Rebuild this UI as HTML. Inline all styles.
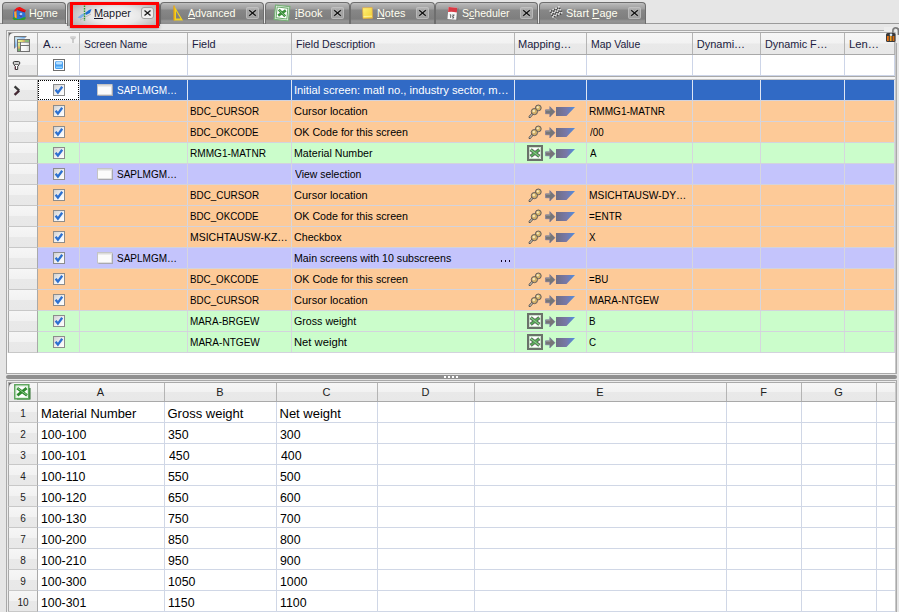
<!DOCTYPE html><html><head><meta charset="utf-8"><style>

*{box-sizing:border-box;margin:0;padding:0}
html,body{width:899px;height:612px;overflow:hidden;background:#e6e6e6;font-family:"Liberation Sans", sans-serif;position:relative}
div,svg{position:absolute;display:block}
.tx{white-space:nowrap;line-height:13px;transform-origin:0 0}
.tab{top:2px;height:22px;border:1px solid #6e6e6e;border-bottom:none;border-radius:4px 4px 0 0;
 background:linear-gradient(#c2c2c2 0px,#b0b0b0 2px,#9e9e9e 6px,#878787 7px,#7e7e7e 16px,#969696 18px,#8c8c8c 21px);}
.cl{top:7px;width:13px;height:12px;border:1px solid rgba(200,200,200,0.6);border-radius:2px;background:rgba(200,200,200,0.45)}
.u{text-decoration:underline}
.hg{background:linear-gradient(#f6f6f6 0%,#f2f2f2 48%,#e9e9e9 52%,#e8e8e8 100%)}
.vl{width:1px}
.hl{height:1px}

</style></head><body>
<div style="left:0;top:23px;width:899px;height:1px;background:#9a9a9a"></div>
<div class="tab" style="left:2px;width:64px;"></div>
<div class="tx" style="left:28.82px;top:7px;font-size:11px;color:#fffef0;transform:scaleX(0.9821);">H<span class="u">o</span>me</div>
<div class="tab" style="left:67px;width:93px;background:radial-gradient(ellipse 60% 85% at 52% 55%,#fafafa 0%,#e8e8e8 45%,#a8a8a8 100%);border-color:#777;height:24px;"></div>
<div class="tx" style="left:94.41px;top:7px;font-size:11px;color:#1a1a2a;transform:scaleX(0.9889);"><span class="u">M</span>apper</div>
<div class="cl" style="left:141px;background:linear-gradient(#e6e6e6,#f4f4f4);border-color:#a4a4a4;border-radius:3px"></div>
<svg style="left:141px;top:7px" width="13" height="12" viewBox="0 0 13 12"><path d="M3.5 3.5 L9.5 8.5 M9.5 3.5 L3.5 8.5" stroke="#1a1a1a" stroke-width="1.3"/></svg>
<div class="tab" style="left:160px;width:104px;"></div>
<div class="tx" style="left:188.00px;top:7px;font-size:11px;color:#fffef0;transform:scaleX(0.9688);"><span class="u">A</span>dvanced</div>
<div class="cl" style="left:246px;"></div>
<svg style="left:246px;top:7px" width="13" height="12" viewBox="0 0 13 12"><path d="M3.2 3.2 L9.8 8.8 M9.8 3.2 L3.2 8.8" stroke="#fff" stroke-opacity="0.3" stroke-width="2.8"/><path d="M3.2 3.2 L9.8 8.8 M9.8 3.2 L3.2 8.8" stroke="#151515" stroke-width="1.4"/></svg>
<div class="tab" style="left:265px;width:85px;"></div>
<div class="tx" style="left:295.00px;top:7px;font-size:11px;color:#fffef0;transform:scaleX(1.0000);"><span class="u">i</span>Book</div>
<div class="cl" style="left:331px;"></div>
<svg style="left:331px;top:7px" width="13" height="12" viewBox="0 0 13 12"><path d="M3.2 3.2 L9.8 8.8 M9.8 3.2 L3.2 8.8" stroke="#fff" stroke-opacity="0.3" stroke-width="2.8"/><path d="M3.2 3.2 L9.8 8.8 M9.8 3.2 L3.2 8.8" stroke="#151515" stroke-width="1.4"/></svg>
<div class="tab" style="left:350px;width:85px;"></div>
<div class="tx" style="left:376.81px;top:7px;font-size:11px;color:#fffef0;transform:scaleX(0.9857);"><span class="u">N</span>otes</div>
<div class="cl" style="left:416px;"></div>
<svg style="left:416px;top:7px" width="13" height="12" viewBox="0 0 13 12"><path d="M3.2 3.2 L9.8 8.8 M9.8 3.2 L3.2 8.8" stroke="#fff" stroke-opacity="0.3" stroke-width="2.8"/><path d="M3.2 3.2 L9.8 8.8 M9.8 3.2 L3.2 8.8" stroke="#151515" stroke-width="1.4"/></svg>
<div class="tab" style="left:435px;width:103px;"></div>
<div class="tx" style="left:461.74px;top:7px;font-size:11px;color:#fffef0;transform:scaleX(0.9604);">S<span class="u">c</span>heduler</div>
<div class="cl" style="left:520px;"></div>
<svg style="left:520px;top:7px" width="13" height="12" viewBox="0 0 13 12"><path d="M3.2 3.2 L9.8 8.8 M9.8 3.2 L3.2 8.8" stroke="#fff" stroke-opacity="0.3" stroke-width="2.8"/><path d="M3.2 3.2 L9.8 8.8 M9.8 3.2 L3.2 8.8" stroke="#151515" stroke-width="1.4"/></svg>
<div class="tab" style="left:539px;width:107px;"></div>
<div class="tx" style="left:565.91px;top:7px;font-size:11px;color:#fffef0;transform:scaleX(0.9922);">Start <span class="u">P</span>age</div>
<div class="cl" style="left:628px;"></div>
<svg style="left:628px;top:7px" width="13" height="12" viewBox="0 0 13 12"><path d="M3.2 3.2 L9.8 8.8 M9.8 3.2 L3.2 8.8" stroke="#fff" stroke-opacity="0.3" stroke-width="2.8"/><path d="M3.2 3.2 L9.8 8.8 M9.8 3.2 L3.2 8.8" stroke="#151515" stroke-width="1.4"/></svg>
<svg style="left:11px;top:5px" width="16" height="15" viewBox="0 0 16 15"><path d="M2 8.5 Q2 4.5 5.5 3.5 L14 6.5 L14.5 12 Q14 14.5 8.5 14.5 Q2 14.5 2 11.5 Z" fill="#2f70d2"/><path d="M3.5 5 Q6 1.5 9 2 L15 5.2 L14 7.2 L6.5 5 L3.5 7 Z" fill="#f01414"/><path d="M7 4.8 L14 7" stroke="#b00" stroke-width="0.8"/><path d="M3.2 6.5 L5.5 6 L6 13 L3.5 13.5 Z" fill="#f08a1a"/><path d="M4 7 L4.5 12.5" stroke="#ffc060" stroke-width="0.8"/><circle cx="10" cy="9" r="1.3" fill="#a8d0ff"/><path d="M8.5 10 Q9 12 11 11" stroke="#6a2a80" stroke-width="0.9" fill="none"/><path d="M1.5 13 Q3 11.5 5 13.5 Q8 15 11 13 Q13 12 15 12.5 L14 14.5 Q9 16 5 15.5 Q2 15 1.5 13 Z" fill="#2aa02a"/></svg>
<svg style="left:76px;top:5px" width="17" height="17" viewBox="0 0 17 17"><path d="M1.5 12.5 L6 9 L8 8.5 L9 10 L4.5 13.5 Z" fill="#7ab0e8"/><path d="M9 8 L13 5 L15.5 4 L14 8 L10 10 Z" fill="#1f6fd0"/><path d="M4 15 L15 9" stroke="#a0a0a0" stroke-width="0.6"/><path d="M8.5 0.5 V16" stroke="#2e9a2e" stroke-width="1.4" stroke-dasharray="1.5 1"/></svg>
<svg style="left:172px;top:4px" width="13" height="18" viewBox="0 0 13 18"><path d="M2 1.5 L2 16.5 L11 16.5 Z M4 7 L4 14.5 L8.5 14.5 Z" fill="#f2d21e" fill-rule="evenodd"/><path d="M2 1.5 L2 16.5" stroke="#e8a010" stroke-width="1.2"/></svg>
<svg style="left:273px;top:4px" width="18" height="18" viewBox="0 0 18 18"><g transform="rotate(6 9 9)"><rect x="1.8" y="1.8" width="14.4" height="14.4" fill="#eef8ee" stroke="#78b078" stroke-width="1.2"/><rect x="3.6" y="3.6" width="10.8" height="10.8" fill="#fff" stroke="#68a868" stroke-width="1"/><path d="M5.5 6 L12.5 12 M12.5 6 L5.5 12" stroke="#3a8e3a" stroke-width="2.6"/><path d="M5.8 6.2 L12 11.5" stroke="#98d098" stroke-width="0.7"/></g></svg>
<svg style="left:361px;top:6px" width="13" height="14" viewBox="0 0 13 14"><defs><linearGradient id="ng" x1="0" y1="0" x2="1" y2="1"><stop offset="0" stop-color="#fff27a"/><stop offset="1" stop-color="#f0cc30"/></linearGradient></defs><path d="M1.5 1.8 L11.2 1.5 L11.6 12.2 L2 12.6 Z" fill="url(#ng)" stroke="#e0a848" stroke-width="0.7"/><path d="M2.5 10.5 L11 10.2" stroke="#fff7a8" stroke-width="0.8"/></svg>
<svg style="left:446px;top:5px" width="14" height="16" viewBox="0 0 14 16"><g transform="rotate(5 7 8)"><rect x="10.5" y="3" width="1.8" height="12" fill="#7a7a7a"/><rect x="2" y="2.5" width="8.8" height="12" fill="#f8f8f8"/><path d="M2 2.5 H10.8 V7.2 Q6 6.5 2 7.5 Z" fill="#d83a44"/><path d="M4 10 H5 V13 M6.5 10 H8.5 L6.7 11.4 Q8.6 11.6 8 13 H6.5" fill="none" stroke="#555" stroke-width="0.9"/></g></svg>
<svg style="left:549px;top:5px" width="16" height="16" viewBox="0 0 16 16"><g transform="rotate(-25 8 7)" opacity="0.9"><rect x="1.5" y="2.5" width="1.6" height="1.6" fill="#f0f0f0"/><rect x="3.1" y="3.1" width="1.6" height="1.6" fill="#404040"/><rect x="4.7" y="2.5" width="1.6" height="1.6" fill="#f0f0f0"/><rect x="6.3" y="3.1" width="1.6" height="1.6" fill="#404040"/><rect x="7.9" y="2.5" width="1.6" height="1.6" fill="#f0f0f0"/><rect x="9.5" y="3.1" width="1.6" height="1.6" fill="#404040"/><rect x="11.1" y="2.5" width="1.6" height="1.6" fill="#f0f0f0"/><rect x="1.5" y="4.1" width="1.6" height="1.6" fill="#404040"/><rect x="3.1" y="4.7" width="1.6" height="1.6" fill="#f0f0f0"/><rect x="4.7" y="4.1" width="1.6" height="1.6" fill="#404040"/><rect x="6.3" y="4.7" width="1.6" height="1.6" fill="#f0f0f0"/><rect x="7.9" y="4.1" width="1.6" height="1.6" fill="#404040"/><rect x="9.5" y="4.7" width="1.6" height="1.6" fill="#f0f0f0"/><rect x="11.1" y="4.1" width="1.6" height="1.6" fill="#404040"/><rect x="1.5" y="5.7" width="1.6" height="1.6" fill="#f0f0f0"/><rect x="3.1" y="6.3" width="1.6" height="1.6" fill="#404040"/><rect x="4.7" y="5.7" width="1.6" height="1.6" fill="#f0f0f0"/><rect x="6.3" y="6.3" width="1.6" height="1.6" fill="#404040"/><rect x="7.9" y="5.7" width="1.6" height="1.6" fill="#f0f0f0"/><rect x="9.5" y="6.3" width="1.6" height="1.6" fill="#404040"/><rect x="11.1" y="5.7" width="1.6" height="1.6" fill="#f0f0f0"/><rect x="1.5" y="7.3" width="1.6" height="1.6" fill="#404040"/><rect x="3.1" y="7.9" width="1.6" height="1.6" fill="#f0f0f0"/><rect x="4.7" y="7.3" width="1.6" height="1.6" fill="#404040"/><rect x="6.3" y="7.9" width="1.6" height="1.6" fill="#f0f0f0"/><rect x="7.9" y="7.3" width="1.6" height="1.6" fill="#404040"/><rect x="9.5" y="7.9" width="1.6" height="1.6" fill="#f0f0f0"/><rect x="11.1" y="7.3" width="1.6" height="1.6" fill="#404040"/><rect x="1.5" y="8.9" width="1.6" height="1.6" fill="#f0f0f0"/><rect x="3.1" y="9.5" width="1.6" height="1.6" fill="#404040"/><rect x="4.7" y="8.9" width="1.6" height="1.6" fill="#f0f0f0"/><rect x="6.3" y="9.5" width="1.6" height="1.6" fill="#404040"/><rect x="7.9" y="8.9" width="1.6" height="1.6" fill="#f0f0f0"/><rect x="9.5" y="9.5" width="1.6" height="1.6" fill="#404040"/><rect x="11.1" y="8.9" width="1.6" height="1.6" fill="#f0f0f0"/></g><path d="M3.5 11 L7.5 15" stroke="#d0d0d0" stroke-width="0.9" opacity="0.6"/></svg>
<div style="left:70px;top:2px;width:89px;height:26px;border:3px solid #ff0000;box-shadow:0 1px 3px rgba(0,0,0,0.35)"></div>
<div style="left:6px;top:30px;width:891px;height:344px;border:1px solid #a9a9a9;background:#f0f0f0"></div>
<div style="left:7px;top:353px;width:889px;height:20px;background:#fff"></div>
<div style="left:38px;top:55px;width:857px;height:21px;background:#fff"></div>
<div style="left:884px;top:27px;width:15px;height:16px;background:#ececec"></div>
<div class="hg" style="left:8px;top:32px;width:887px;height:23px;border-left:1px solid #a9a9a9;border-top:1px solid #a9a9a9;border-bottom:1px solid #a9a9a9"></div>
<div style="left:895px;top:32px;width:1px;height:341px;background:#c8c8c8"></div>
<div class="vl" style="left:37px;top:33px;height:21px;background:#b4b4b4"></div>
<div class="vl" style="left:79px;top:33px;height:21px;background:#b4b4b4"></div>
<div class="vl" style="left:187px;top:33px;height:21px;background:#b4b4b4"></div>
<div class="vl" style="left:291px;top:33px;height:21px;background:#b4b4b4"></div>
<div class="vl" style="left:514px;top:33px;height:21px;background:#b4b4b4"></div>
<div class="vl" style="left:586px;top:33px;height:21px;background:#b4b4b4"></div>
<div class="vl" style="left:692px;top:33px;height:21px;background:#b4b4b4"></div>
<div class="vl" style="left:760px;top:33px;height:21px;background:#b4b4b4"></div>
<div class="vl" style="left:844px;top:33px;height:21px;background:#b4b4b4"></div>
<div class="vl" style="left:894px;top:33px;height:21px;background:#b4b4b4"></div>
<div class="tx" style="left:42.90px;top:38px;font-size:11px;color:#1b1b40;transform:scaleX(1.0353);">A…</div>
<div class="tx" style="left:83.86px;top:38px;font-size:11px;color:#1b1b40;transform:scaleX(0.9424);">Screen Name</div>
<div class="tx" style="left:191.71px;top:38px;font-size:11px;color:#1b1b40;transform:scaleX(0.9909);">Field</div>
<div class="tx" style="left:295.63px;top:38px;font-size:11px;color:#1b1b40;transform:scaleX(0.9675);">Field Description</div>
<div class="tx" style="left:518.30px;top:38px;font-size:11px;color:#1b1b40;transform:scaleX(1.0039);">Mapping…</div>
<div class="tx" style="left:590.65px;top:38px;font-size:11px;color:#1b1b40;transform:scaleX(0.9510);">Map Value</div>
<div class="tx" style="left:696.80px;top:38px;font-size:11px;color:#1b1b40;transform:scaleX(1.0000);">Dynami…</div>
<div class="tx" style="left:764.62px;top:38px;font-size:11px;color:#1b1b40;transform:scaleX(0.9836);">Dynamic F…</div>
<div class="tx" style="left:848.68px;top:38px;font-size:11px;color:#1b1b40;transform:scaleX(1.0222);">Len…</div>
<svg style="left:9px;top:33px" width="5" height="5" viewBox="0 0 5 5"><path d="M0 0 H5 Q0 0 0 5 Z" fill="#666"/></svg>
<svg style="left:13px;top:35px" width="18" height="18" viewBox="0 0 18 18"><defs><linearGradient id="hb" x1="0" y1="0" x2="1" y2="1"><stop offset="0" stop-color="#d8f8ff"/><stop offset="0.4" stop-color="#60a8f0"/><stop offset="1" stop-color="#7070c8"/></linearGradient><linearGradient id="ht" x1="0" x2="1"><stop offset="0" stop-color="#f4f4a8"/><stop offset="0.35" stop-color="#d8e070"/><stop offset="0.55" stop-color="#e0a868"/><stop offset="0.7" stop-color="#88b878"/><stop offset="1" stop-color="#88b878"/></linearGradient><linearGradient id="hl" x1="0" y1="0" x2="0" y2="1"><stop offset="0" stop-color="#f4f4a8"/><stop offset="0.4" stop-color="#c8e088"/><stop offset="0.65" stop-color="#e0a868"/><stop offset="0.8" stop-color="#78b070"/><stop offset="1" stop-color="#78b070"/></linearGradient><linearGradient id="hw" x1="0" x2="1"><stop offset="0" stop-color="#fff"/><stop offset="0.7" stop-color="#f4f4f4"/><stop offset="1" stop-color="#d0d0d0"/></linearGradient></defs><path d="M1 1 H14 L12.6 2.4 H2.4 V12.6 L1 14 Z" fill="#777"/><path d="M2.2 2.2 H12.5 L11.5 3.5 H3.5 V11.5 L2.2 12.8 Z" fill="url(#hb)"/><rect x="4.5" y="4.5" width="12" height="12" fill="url(#hw)" stroke="#707070" stroke-width="1"/><rect x="5" y="5" width="11" height="2" fill="url(#ht)"/><rect x="5" y="7" width="2" height="9" fill="url(#hl)"/><path d="M7.5 10.5 H16" stroke="#707070" stroke-width="1"/><path d="M7.5 7 V16" stroke="#707070" stroke-width="1"/><path d="M5 7.5 H16" stroke="#707070" stroke-width="0.6"/></svg>
<svg style="left:69px;top:35px" width="8" height="9" viewBox="0 0 8 9"><path d="M1.2 1.5 Q4 0.8 6.8 1.5 V3 L4.8 4.8 V8 H3.2 V4.8 L1.2 3 Z" fill="#c4c4c4"/><path d="M1.5 2.2 H6.5" stroke="#e4e4e4" stroke-width="0.6"/></svg>
<div class="hg" style="left:8px;top:55px;width:30px;height:21px;border-left:1px solid #a9a9a9;border-right:1px solid #a9a9a9;border-bottom:1px solid #b0b0b0"></div>
<div class="vl" style="left:79px;top:55px;height:20px;background:#cdd5e8"></div>
<div class="vl" style="left:187px;top:55px;height:20px;background:#cdd5e8"></div>
<div class="vl" style="left:291px;top:55px;height:20px;background:#cdd5e8"></div>
<div class="vl" style="left:514px;top:55px;height:20px;background:#cdd5e8"></div>
<div class="vl" style="left:586px;top:55px;height:20px;background:#cdd5e8"></div>
<div class="vl" style="left:692px;top:55px;height:20px;background:#cdd5e8"></div>
<div class="vl" style="left:760px;top:55px;height:20px;background:#cdd5e8"></div>
<div class="vl" style="left:844px;top:55px;height:20px;background:#cdd5e8"></div>
<div class="vl" style="left:894px;top:55px;height:20px;background:#cdd5e8"></div>
<div class="hl" style="left:38px;top:75px;width:857px;background:#cdd5e8"></div>
<div class="hl" style="left:8px;top:76px;width:887px;background:#a9a9a9"></div>
<div style="left:8px;top:77px;width:887px;height:2px;background:#f6f6f6"></div>
<div class="hl" style="left:8px;top:79px;width:887px;background:#c4c4c4"></div>
<svg style="left:12px;top:60px" width="9" height="11" viewBox="0 0 9 11"><path d="M2.3 1.5 H6.7 Q7.8 1.5 7.8 3 Q7.8 4.5 6.7 4.5 H2.3 Q1.2 4.5 1.2 3 Q1.2 1.5 2.3 1.5 Z" fill="#fff" stroke="#383838" stroke-width="1"/><path d="M1.8 3 H7.2" stroke="#383838" stroke-width="0.5"/><path d="M1.8 4.8 L3.3 6.2 V9.5 H5.7 V6.2 L7.2 4.8" fill="#fff" stroke="#383838" stroke-width="1"/><path d="M3.3 6.5 V9.5" fill="none" stroke="#5a2a3a" stroke-width="1"/></svg>
<svg style="left:53px;top:59px" width="12" height="12" viewBox="0 0 12 12"><rect x="0.5" y="0.5" width="11" height="11" fill="#fff" stroke="#6e6e6e"/><rect x="2" y="2" width="8" height="8" rx="1.5" fill="#4aa0f0"/><rect x="3" y="2.5" width="6" height="3" rx="1" fill="#b8e0ff"/><rect x="3" y="7.5" width="6" height="1.5" fill="#8ad0ff"/></svg>
<div class="hg" style="left:8px;top:80px;width:30px;height:21px;border-left:1px solid #a9a9a9;border-right:1px solid #a9a9a9;border-bottom:1px solid #c8c8c8"></div>
<div style="left:38px;top:80px;width:857px;height:20px;background:#316ac5"></div>
<div class="hl" style="left:38px;top:100px;width:857px;background:#d3d3dd"></div>
<div class="vl" style="left:79px;top:80px;height:20px;background:#dfe6f4"></div>
<div class="vl" style="left:187px;top:80px;height:20px;background:#dfe6f4"></div>
<div class="vl" style="left:291px;top:80px;height:20px;background:#dfe6f4"></div>
<div class="vl" style="left:514px;top:80px;height:20px;background:#dfe6f4"></div>
<div class="vl" style="left:586px;top:80px;height:20px;background:#dfe6f4"></div>
<div class="vl" style="left:692px;top:80px;height:20px;background:#dfe6f4"></div>
<div class="vl" style="left:760px;top:80px;height:20px;background:#dfe6f4"></div>
<div class="vl" style="left:844px;top:80px;height:20px;background:#dfe6f4"></div>
<div class="vl" style="left:894px;top:80px;height:20px;background:#dfe6f4"></div>
<div style="left:38px;top:80px;width:41px;height:20px;background:#fff;border:1px dotted #000"></div>
<svg style="left:13px;top:85px" width="9" height="11" viewBox="0 0 9 11"><path d="M1.6 1.4 L6.2 5.6" fill="none" stroke="#3a3a3a" stroke-width="2.3"/><path d="M6.2 5.6 L1.6 9.8" fill="none" stroke="#3a2630" stroke-width="2.3"/><path d="M2.5 8.6 L4.5 6.8" stroke="#6a2a3a" stroke-width="0.8"/></svg>
<div class="tx" style="left:117.49px;top:84px;font-size:11px;color:#fff;transform:scaleX(0.9109);">SAPLMGM…</div>
<svg style="left:97px;top:84px" width="16" height="12" viewBox="0 0 16 12"><rect x="0.5" y="0.5" width="14.5" height="10.5" fill="#fbfbfb" stroke="#c4c4c4"/><rect x="1" y="1" width="13.5" height="1.5" fill="#dcdcdc"/><rect x="15" y="1.5" width="1" height="10.5" fill="#a8a8b0"/><rect x="1.5" y="11" width="14.5" height="1" fill="#a8a8b0"/></svg>
<div class="tx" style="left:293.58px;top:84px;font-size:11px;color:#fff;transform:scaleX(1.0212);">Initial screen: matl no., industry sector, m…</div>
<svg style="left:53px;top:84px" width="12" height="12" viewBox="0 0 12 12"><defs><linearGradient id="cbg" x1="0" y1="0" x2="1" y2="1"><stop offset="0" stop-color="#cfcfcf"/><stop offset="0.6" stop-color="#f4f4f4"/><stop offset="1" stop-color="#fff"/></linearGradient></defs><rect x="0.5" y="0.5" width="11" height="11" fill="url(#cbg)" stroke="#8c8c8c"/><path d="M2.6 5.8 L4.9 8.6 L9.2 2.8" fill="none" stroke="#2c70d0" stroke-width="2.3"/></svg>
<div class="hg" style="left:8px;top:101px;width:30px;height:21px;border-left:1px solid #a9a9a9;border-right:1px solid #a9a9a9;border-bottom:1px solid #c8c8c8"></div>
<div style="left:38px;top:101px;width:857px;height:20px;background:#fdca98"></div>
<div class="hl" style="left:38px;top:121px;width:857px;background:#d3d3dd"></div>
<div class="vl" style="left:79px;top:101px;height:20px;background:#d6d6de"></div>
<div class="vl" style="left:187px;top:101px;height:20px;background:#d6d6de"></div>
<div class="vl" style="left:291px;top:101px;height:20px;background:#d6d6de"></div>
<div class="vl" style="left:514px;top:101px;height:20px;background:#d6d6de"></div>
<div class="vl" style="left:586px;top:101px;height:20px;background:#d6d6de"></div>
<div class="vl" style="left:692px;top:101px;height:20px;background:#d6d6de"></div>
<div class="vl" style="left:760px;top:101px;height:20px;background:#d6d6de"></div>
<div class="vl" style="left:844px;top:101px;height:20px;background:#d6d6de"></div>
<div class="vl" style="left:894px;top:101px;height:20px;background:#d6d6de"></div>
<div class="tx" style="left:189.90px;top:105px;font-size:11px;color:#000;transform:scaleX(0.8960);">BDC_CURSOR</div>
<div class="tx" style="left:293.60px;top:105px;font-size:11px;color:#000;transform:scaleX(0.9958);">Cursor location</div>
<div class="tx" style="left:588.68px;top:105px;font-size:11px;color:#000;transform:scaleX(0.9160);">RMMG1-MATNR</div>
<svg style="left:53px;top:105px" width="12" height="12" viewBox="0 0 12 12"><defs><linearGradient id="cbg" x1="0" y1="0" x2="1" y2="1"><stop offset="0" stop-color="#cfcfcf"/><stop offset="0.6" stop-color="#f4f4f4"/><stop offset="1" stop-color="#fff"/></linearGradient></defs><rect x="0.5" y="0.5" width="11" height="11" fill="url(#cbg)" stroke="#8c8c8c"/><path d="M2.6 5.8 L4.9 8.6 L9.2 2.8" fill="none" stroke="#2c70d0" stroke-width="2.3"/></svg>
<svg style="left:528px;top:104px" width="14" height="14" viewBox="0 0 14 14"><path d="M1.8 12.8 L4.8 9.5" stroke="#4a4a50" stroke-width="2.4" stroke-linecap="round"/><path d="M1.8 12.8 L4.8 9.5" stroke="#f4ecd0" stroke-width="1" stroke-linecap="round"/><circle cx="10.3" cy="3.9" r="2.9" fill="#d4b46a" stroke="#55525a" stroke-width="0.9"/><circle cx="6.4" cy="7.6" r="3.1" fill="#d2b068" stroke="#55525a" stroke-width="0.9"/><circle cx="9.8" cy="3.3" r="1.1" fill="#f8ecc0"/><circle cx="5.8" cy="7" r="1.2" fill="#f6e8b8"/></svg>
<svg style="left:545px;top:106px" width="11" height="12" viewBox="0 0 11 12"><path d="M0.5 3.8 H4.8 V0.6 L10 5.8 L4.8 11 V7.8 H0.5 Z" fill="#767676" stroke="#6a6aa8" stroke-width="0.5"/><path d="M1 4.3 H5 V2" stroke="#9a9a9a" stroke-width="0.8" fill="none"/></svg>
<svg style="left:556px;top:107px" width="19" height="9" viewBox="0 0 19 9"><defs><linearGradient id="pg" x1="0" x2="1"><stop offset="0" stop-color="#6e6e84"/><stop offset="0.55" stop-color="#7878a8"/><stop offset="1" stop-color="#4f8ee0"/></linearGradient></defs><path d="M0 0 H19 L10.5 9 H0 Z" fill="url(#pg)"/></svg>
<div class="hg" style="left:8px;top:122px;width:30px;height:21px;border-left:1px solid #a9a9a9;border-right:1px solid #a9a9a9;border-bottom:1px solid #c8c8c8"></div>
<div style="left:38px;top:122px;width:857px;height:20px;background:#fdca98"></div>
<div class="hl" style="left:38px;top:142px;width:857px;background:#d3d3dd"></div>
<div class="vl" style="left:79px;top:122px;height:20px;background:#d6d6de"></div>
<div class="vl" style="left:187px;top:122px;height:20px;background:#d6d6de"></div>
<div class="vl" style="left:291px;top:122px;height:20px;background:#d6d6de"></div>
<div class="vl" style="left:514px;top:122px;height:20px;background:#d6d6de"></div>
<div class="vl" style="left:586px;top:122px;height:20px;background:#d6d6de"></div>
<div class="vl" style="left:692px;top:122px;height:20px;background:#d6d6de"></div>
<div class="vl" style="left:760px;top:122px;height:20px;background:#d6d6de"></div>
<div class="vl" style="left:844px;top:122px;height:20px;background:#d6d6de"></div>
<div class="vl" style="left:894px;top:122px;height:20px;background:#d6d6de"></div>
<div class="tx" style="left:189.91px;top:126px;font-size:11px;color:#000;transform:scaleX(0.8895);">BDC_OKCODE</div>
<div class="tx" style="left:293.90px;top:126px;font-size:11px;color:#000;transform:scaleX(0.9709);">OK Code for this screen</div>
<div class="tx" style="left:589.60px;top:126px;font-size:11px;color:#000;transform:scaleX(0.8900);">/00</div>
<svg style="left:53px;top:126px" width="12" height="12" viewBox="0 0 12 12"><defs><linearGradient id="cbg" x1="0" y1="0" x2="1" y2="1"><stop offset="0" stop-color="#cfcfcf"/><stop offset="0.6" stop-color="#f4f4f4"/><stop offset="1" stop-color="#fff"/></linearGradient></defs><rect x="0.5" y="0.5" width="11" height="11" fill="url(#cbg)" stroke="#8c8c8c"/><path d="M2.6 5.8 L4.9 8.6 L9.2 2.8" fill="none" stroke="#2c70d0" stroke-width="2.3"/></svg>
<svg style="left:528px;top:125px" width="14" height="14" viewBox="0 0 14 14"><path d="M1.8 12.8 L4.8 9.5" stroke="#4a4a50" stroke-width="2.4" stroke-linecap="round"/><path d="M1.8 12.8 L4.8 9.5" stroke="#f4ecd0" stroke-width="1" stroke-linecap="round"/><circle cx="10.3" cy="3.9" r="2.9" fill="#d4b46a" stroke="#55525a" stroke-width="0.9"/><circle cx="6.4" cy="7.6" r="3.1" fill="#d2b068" stroke="#55525a" stroke-width="0.9"/><circle cx="9.8" cy="3.3" r="1.1" fill="#f8ecc0"/><circle cx="5.8" cy="7" r="1.2" fill="#f6e8b8"/></svg>
<svg style="left:545px;top:127px" width="11" height="12" viewBox="0 0 11 12"><path d="M0.5 3.8 H4.8 V0.6 L10 5.8 L4.8 11 V7.8 H0.5 Z" fill="#767676" stroke="#6a6aa8" stroke-width="0.5"/><path d="M1 4.3 H5 V2" stroke="#9a9a9a" stroke-width="0.8" fill="none"/></svg>
<svg style="left:556px;top:128px" width="19" height="9" viewBox="0 0 19 9"><defs><linearGradient id="pg" x1="0" x2="1"><stop offset="0" stop-color="#6e6e84"/><stop offset="0.55" stop-color="#7878a8"/><stop offset="1" stop-color="#4f8ee0"/></linearGradient></defs><path d="M0 0 H19 L10.5 9 H0 Z" fill="url(#pg)"/></svg>
<div class="hg" style="left:8px;top:143px;width:30px;height:21px;border-left:1px solid #a9a9a9;border-right:1px solid #a9a9a9;border-bottom:1px solid #c8c8c8"></div>
<div style="left:38px;top:143px;width:857px;height:20px;background:#cbfdcb"></div>
<div class="hl" style="left:38px;top:163px;width:857px;background:#d3d3dd"></div>
<div class="vl" style="left:79px;top:143px;height:20px;background:#d6d6de"></div>
<div class="vl" style="left:187px;top:143px;height:20px;background:#d6d6de"></div>
<div class="vl" style="left:291px;top:143px;height:20px;background:#d6d6de"></div>
<div class="vl" style="left:514px;top:143px;height:20px;background:#d6d6de"></div>
<div class="vl" style="left:586px;top:143px;height:20px;background:#d6d6de"></div>
<div class="vl" style="left:692px;top:143px;height:20px;background:#d6d6de"></div>
<div class="vl" style="left:760px;top:143px;height:20px;background:#d6d6de"></div>
<div class="vl" style="left:844px;top:143px;height:20px;background:#d6d6de"></div>
<div class="vl" style="left:894px;top:143px;height:20px;background:#d6d6de"></div>
<div class="tx" style="left:189.88px;top:147px;font-size:11px;color:#000;transform:scaleX(0.9160);">RMMG1-MATNR</div>
<div class="tx" style="left:293.63px;top:147px;font-size:11px;color:#000;transform:scaleX(0.9662);">Material Number</div>
<div class="tx" style="left:589.60px;top:147px;font-size:11px;color:#000;transform:scaleX(0.8900);">A</div>
<svg style="left:53px;top:147px" width="12" height="12" viewBox="0 0 12 12"><defs><linearGradient id="cbg" x1="0" y1="0" x2="1" y2="1"><stop offset="0" stop-color="#cfcfcf"/><stop offset="0.6" stop-color="#f4f4f4"/><stop offset="1" stop-color="#fff"/></linearGradient></defs><rect x="0.5" y="0.5" width="11" height="11" fill="url(#cbg)" stroke="#8c8c8c"/><path d="M2.6 5.8 L4.9 8.6 L9.2 2.8" fill="none" stroke="#2c70d0" stroke-width="2.3"/></svg>
<svg style="left:527px;top:145px" width="16" height="16" viewBox="0 0 16 16"><rect x="1" y="1" width="14" height="14" fill="#fff" stroke="#6a726a" stroke-width="2"/><rect x="2.5" y="2.5" width="11" height="11" fill="none" stroke="#a8d0a8" stroke-width="0.6"/><path d="M3.6 4.6 L12.4 11.4 M12.4 4.6 L3.6 11.4" stroke="#5a665a" stroke-width="3.4"/><path d="M3.8 4.8 L12.2 11.2 M12.2 4.8 L3.8 11.2" stroke="#58aa58" stroke-width="2"/><path d="M4 5 L12 11" stroke="#a8e0a8" stroke-width="0.7"/></svg>
<svg style="left:545px;top:148px" width="11" height="12" viewBox="0 0 11 12"><path d="M0.5 3.8 H4.8 V0.6 L10 5.8 L4.8 11 V7.8 H0.5 Z" fill="#767676" stroke="#6a6aa8" stroke-width="0.5"/><path d="M1 4.3 H5 V2" stroke="#9a9a9a" stroke-width="0.8" fill="none"/></svg>
<svg style="left:556px;top:149px" width="19" height="9" viewBox="0 0 19 9"><defs><linearGradient id="pg" x1="0" x2="1"><stop offset="0" stop-color="#6e6e84"/><stop offset="0.55" stop-color="#7878a8"/><stop offset="1" stop-color="#4f8ee0"/></linearGradient></defs><path d="M0 0 H19 L10.5 9 H0 Z" fill="url(#pg)"/></svg>
<div class="hg" style="left:8px;top:164px;width:30px;height:21px;border-left:1px solid #a9a9a9;border-right:1px solid #a9a9a9;border-bottom:1px solid #c8c8c8"></div>
<div style="left:38px;top:164px;width:857px;height:20px;background:#c4c4fc"></div>
<div class="hl" style="left:38px;top:184px;width:857px;background:#d3d3dd"></div>
<div class="vl" style="left:79px;top:164px;height:20px;background:#d6d6de"></div>
<div class="vl" style="left:187px;top:164px;height:20px;background:#d6d6de"></div>
<div class="vl" style="left:291px;top:164px;height:20px;background:#d6d6de"></div>
<div class="vl" style="left:514px;top:164px;height:20px;background:#d6d6de"></div>
<div class="vl" style="left:586px;top:164px;height:20px;background:#d6d6de"></div>
<div class="vl" style="left:692px;top:164px;height:20px;background:#d6d6de"></div>
<div class="vl" style="left:760px;top:164px;height:20px;background:#d6d6de"></div>
<div class="vl" style="left:844px;top:164px;height:20px;background:#d6d6de"></div>
<div class="vl" style="left:894px;top:164px;height:20px;background:#d6d6de"></div>
<div class="tx" style="left:117.49px;top:168px;font-size:11px;color:#000;transform:scaleX(0.9109);">SAPLMGM…</div>
<svg style="left:97px;top:168px" width="16" height="12" viewBox="0 0 16 12"><rect x="0.5" y="0.5" width="14.5" height="10.5" fill="#fbfbfb" stroke="#c4c4c4"/><rect x="1" y="1" width="13.5" height="1.5" fill="#dcdcdc"/><rect x="15" y="1.5" width="1" height="10.5" fill="#a8a8b0"/><rect x="1.5" y="11" width="14.5" height="1" fill="#a8a8b0"/></svg>
<div class="tx" style="left:294.60px;top:168px;font-size:11px;color:#000;transform:scaleX(0.9471);">View selection</div>
<svg style="left:53px;top:168px" width="12" height="12" viewBox="0 0 12 12"><defs><linearGradient id="cbg" x1="0" y1="0" x2="1" y2="1"><stop offset="0" stop-color="#cfcfcf"/><stop offset="0.6" stop-color="#f4f4f4"/><stop offset="1" stop-color="#fff"/></linearGradient></defs><rect x="0.5" y="0.5" width="11" height="11" fill="url(#cbg)" stroke="#8c8c8c"/><path d="M2.6 5.8 L4.9 8.6 L9.2 2.8" fill="none" stroke="#2c70d0" stroke-width="2.3"/></svg>
<div class="hg" style="left:8px;top:185px;width:30px;height:21px;border-left:1px solid #a9a9a9;border-right:1px solid #a9a9a9;border-bottom:1px solid #c8c8c8"></div>
<div style="left:38px;top:185px;width:857px;height:20px;background:#fdca98"></div>
<div class="hl" style="left:38px;top:205px;width:857px;background:#d3d3dd"></div>
<div class="vl" style="left:79px;top:185px;height:20px;background:#d6d6de"></div>
<div class="vl" style="left:187px;top:185px;height:20px;background:#d6d6de"></div>
<div class="vl" style="left:291px;top:185px;height:20px;background:#d6d6de"></div>
<div class="vl" style="left:514px;top:185px;height:20px;background:#d6d6de"></div>
<div class="vl" style="left:586px;top:185px;height:20px;background:#d6d6de"></div>
<div class="vl" style="left:692px;top:185px;height:20px;background:#d6d6de"></div>
<div class="vl" style="left:760px;top:185px;height:20px;background:#d6d6de"></div>
<div class="vl" style="left:844px;top:185px;height:20px;background:#d6d6de"></div>
<div class="vl" style="left:894px;top:185px;height:20px;background:#d6d6de"></div>
<div class="tx" style="left:189.90px;top:189px;font-size:11px;color:#000;transform:scaleX(0.8960);">BDC_CURSOR</div>
<div class="tx" style="left:293.60px;top:189px;font-size:11px;color:#000;transform:scaleX(0.9958);">Cursor location</div>
<div class="tx" style="left:588.66px;top:189px;font-size:11px;color:#000;transform:scaleX(0.9353);">MSICHTAUSW-DY…</div>
<svg style="left:53px;top:189px" width="12" height="12" viewBox="0 0 12 12"><defs><linearGradient id="cbg" x1="0" y1="0" x2="1" y2="1"><stop offset="0" stop-color="#cfcfcf"/><stop offset="0.6" stop-color="#f4f4f4"/><stop offset="1" stop-color="#fff"/></linearGradient></defs><rect x="0.5" y="0.5" width="11" height="11" fill="url(#cbg)" stroke="#8c8c8c"/><path d="M2.6 5.8 L4.9 8.6 L9.2 2.8" fill="none" stroke="#2c70d0" stroke-width="2.3"/></svg>
<svg style="left:528px;top:188px" width="14" height="14" viewBox="0 0 14 14"><path d="M1.8 12.8 L4.8 9.5" stroke="#4a4a50" stroke-width="2.4" stroke-linecap="round"/><path d="M1.8 12.8 L4.8 9.5" stroke="#f4ecd0" stroke-width="1" stroke-linecap="round"/><circle cx="10.3" cy="3.9" r="2.9" fill="#d4b46a" stroke="#55525a" stroke-width="0.9"/><circle cx="6.4" cy="7.6" r="3.1" fill="#d2b068" stroke="#55525a" stroke-width="0.9"/><circle cx="9.8" cy="3.3" r="1.1" fill="#f8ecc0"/><circle cx="5.8" cy="7" r="1.2" fill="#f6e8b8"/></svg>
<svg style="left:545px;top:190px" width="11" height="12" viewBox="0 0 11 12"><path d="M0.5 3.8 H4.8 V0.6 L10 5.8 L4.8 11 V7.8 H0.5 Z" fill="#767676" stroke="#6a6aa8" stroke-width="0.5"/><path d="M1 4.3 H5 V2" stroke="#9a9a9a" stroke-width="0.8" fill="none"/></svg>
<svg style="left:556px;top:191px" width="19" height="9" viewBox="0 0 19 9"><defs><linearGradient id="pg" x1="0" x2="1"><stop offset="0" stop-color="#6e6e84"/><stop offset="0.55" stop-color="#7878a8"/><stop offset="1" stop-color="#4f8ee0"/></linearGradient></defs><path d="M0 0 H19 L10.5 9 H0 Z" fill="url(#pg)"/></svg>
<div class="hg" style="left:8px;top:206px;width:30px;height:21px;border-left:1px solid #a9a9a9;border-right:1px solid #a9a9a9;border-bottom:1px solid #c8c8c8"></div>
<div style="left:38px;top:206px;width:857px;height:20px;background:#fdca98"></div>
<div class="hl" style="left:38px;top:226px;width:857px;background:#d3d3dd"></div>
<div class="vl" style="left:79px;top:206px;height:20px;background:#d6d6de"></div>
<div class="vl" style="left:187px;top:206px;height:20px;background:#d6d6de"></div>
<div class="vl" style="left:291px;top:206px;height:20px;background:#d6d6de"></div>
<div class="vl" style="left:514px;top:206px;height:20px;background:#d6d6de"></div>
<div class="vl" style="left:586px;top:206px;height:20px;background:#d6d6de"></div>
<div class="vl" style="left:692px;top:206px;height:20px;background:#d6d6de"></div>
<div class="vl" style="left:760px;top:206px;height:20px;background:#d6d6de"></div>
<div class="vl" style="left:844px;top:206px;height:20px;background:#d6d6de"></div>
<div class="vl" style="left:894px;top:206px;height:20px;background:#d6d6de"></div>
<div class="tx" style="left:189.91px;top:210px;font-size:11px;color:#000;transform:scaleX(0.8895);">BDC_OKCODE</div>
<div class="tx" style="left:293.90px;top:210px;font-size:11px;color:#000;transform:scaleX(0.9709);">OK Code for this screen</div>
<div class="tx" style="left:588.90px;top:210px;font-size:11px;color:#000;transform:scaleX(0.9056);">=ENTR</div>
<svg style="left:53px;top:210px" width="12" height="12" viewBox="0 0 12 12"><defs><linearGradient id="cbg" x1="0" y1="0" x2="1" y2="1"><stop offset="0" stop-color="#cfcfcf"/><stop offset="0.6" stop-color="#f4f4f4"/><stop offset="1" stop-color="#fff"/></linearGradient></defs><rect x="0.5" y="0.5" width="11" height="11" fill="url(#cbg)" stroke="#8c8c8c"/><path d="M2.6 5.8 L4.9 8.6 L9.2 2.8" fill="none" stroke="#2c70d0" stroke-width="2.3"/></svg>
<svg style="left:528px;top:209px" width="14" height="14" viewBox="0 0 14 14"><path d="M1.8 12.8 L4.8 9.5" stroke="#4a4a50" stroke-width="2.4" stroke-linecap="round"/><path d="M1.8 12.8 L4.8 9.5" stroke="#f4ecd0" stroke-width="1" stroke-linecap="round"/><circle cx="10.3" cy="3.9" r="2.9" fill="#d4b46a" stroke="#55525a" stroke-width="0.9"/><circle cx="6.4" cy="7.6" r="3.1" fill="#d2b068" stroke="#55525a" stroke-width="0.9"/><circle cx="9.8" cy="3.3" r="1.1" fill="#f8ecc0"/><circle cx="5.8" cy="7" r="1.2" fill="#f6e8b8"/></svg>
<svg style="left:545px;top:211px" width="11" height="12" viewBox="0 0 11 12"><path d="M0.5 3.8 H4.8 V0.6 L10 5.8 L4.8 11 V7.8 H0.5 Z" fill="#767676" stroke="#6a6aa8" stroke-width="0.5"/><path d="M1 4.3 H5 V2" stroke="#9a9a9a" stroke-width="0.8" fill="none"/></svg>
<svg style="left:556px;top:212px" width="19" height="9" viewBox="0 0 19 9"><defs><linearGradient id="pg" x1="0" x2="1"><stop offset="0" stop-color="#6e6e84"/><stop offset="0.55" stop-color="#7878a8"/><stop offset="1" stop-color="#4f8ee0"/></linearGradient></defs><path d="M0 0 H19 L10.5 9 H0 Z" fill="url(#pg)"/></svg>
<div class="hg" style="left:8px;top:227px;width:30px;height:21px;border-left:1px solid #a9a9a9;border-right:1px solid #a9a9a9;border-bottom:1px solid #c8c8c8"></div>
<div style="left:38px;top:227px;width:857px;height:20px;background:#fdca98"></div>
<div class="hl" style="left:38px;top:247px;width:857px;background:#d3d3dd"></div>
<div class="vl" style="left:79px;top:227px;height:20px;background:#d6d6de"></div>
<div class="vl" style="left:187px;top:227px;height:20px;background:#d6d6de"></div>
<div class="vl" style="left:291px;top:227px;height:20px;background:#d6d6de"></div>
<div class="vl" style="left:514px;top:227px;height:20px;background:#d6d6de"></div>
<div class="vl" style="left:586px;top:227px;height:20px;background:#d6d6de"></div>
<div class="vl" style="left:692px;top:227px;height:20px;background:#d6d6de"></div>
<div class="vl" style="left:760px;top:227px;height:20px;background:#d6d6de"></div>
<div class="vl" style="left:844px;top:227px;height:20px;background:#d6d6de"></div>
<div class="vl" style="left:894px;top:227px;height:20px;background:#d6d6de"></div>
<div class="tx" style="left:189.85px;top:231px;font-size:11px;color:#000;transform:scaleX(0.9500);">MSICHTAUSW-KZ…</div>
<div class="tx" style="left:293.63px;top:231px;font-size:11px;color:#000;transform:scaleX(0.9708);">Checkbox</div>
<div class="tx" style="left:588.71px;top:231px;font-size:11px;color:#000;transform:scaleX(0.8900);">X</div>
<svg style="left:53px;top:231px" width="12" height="12" viewBox="0 0 12 12"><defs><linearGradient id="cbg" x1="0" y1="0" x2="1" y2="1"><stop offset="0" stop-color="#cfcfcf"/><stop offset="0.6" stop-color="#f4f4f4"/><stop offset="1" stop-color="#fff"/></linearGradient></defs><rect x="0.5" y="0.5" width="11" height="11" fill="url(#cbg)" stroke="#8c8c8c"/><path d="M2.6 5.8 L4.9 8.6 L9.2 2.8" fill="none" stroke="#2c70d0" stroke-width="2.3"/></svg>
<svg style="left:528px;top:230px" width="14" height="14" viewBox="0 0 14 14"><path d="M1.8 12.8 L4.8 9.5" stroke="#4a4a50" stroke-width="2.4" stroke-linecap="round"/><path d="M1.8 12.8 L4.8 9.5" stroke="#f4ecd0" stroke-width="1" stroke-linecap="round"/><circle cx="10.3" cy="3.9" r="2.9" fill="#d4b46a" stroke="#55525a" stroke-width="0.9"/><circle cx="6.4" cy="7.6" r="3.1" fill="#d2b068" stroke="#55525a" stroke-width="0.9"/><circle cx="9.8" cy="3.3" r="1.1" fill="#f8ecc0"/><circle cx="5.8" cy="7" r="1.2" fill="#f6e8b8"/></svg>
<svg style="left:545px;top:232px" width="11" height="12" viewBox="0 0 11 12"><path d="M0.5 3.8 H4.8 V0.6 L10 5.8 L4.8 11 V7.8 H0.5 Z" fill="#767676" stroke="#6a6aa8" stroke-width="0.5"/><path d="M1 4.3 H5 V2" stroke="#9a9a9a" stroke-width="0.8" fill="none"/></svg>
<svg style="left:556px;top:233px" width="19" height="9" viewBox="0 0 19 9"><defs><linearGradient id="pg" x1="0" x2="1"><stop offset="0" stop-color="#6e6e84"/><stop offset="0.55" stop-color="#7878a8"/><stop offset="1" stop-color="#4f8ee0"/></linearGradient></defs><path d="M0 0 H19 L10.5 9 H0 Z" fill="url(#pg)"/></svg>
<div class="hg" style="left:8px;top:248px;width:30px;height:21px;border-left:1px solid #a9a9a9;border-right:1px solid #a9a9a9;border-bottom:1px solid #c8c8c8"></div>
<div style="left:38px;top:248px;width:857px;height:20px;background:#c4c4fc"></div>
<div class="hl" style="left:38px;top:268px;width:857px;background:#d3d3dd"></div>
<div class="vl" style="left:79px;top:248px;height:20px;background:#d6d6de"></div>
<div class="vl" style="left:187px;top:248px;height:20px;background:#d6d6de"></div>
<div class="vl" style="left:291px;top:248px;height:20px;background:#d6d6de"></div>
<div class="vl" style="left:514px;top:248px;height:20px;background:#d6d6de"></div>
<div class="vl" style="left:586px;top:248px;height:20px;background:#d6d6de"></div>
<div class="vl" style="left:692px;top:248px;height:20px;background:#d6d6de"></div>
<div class="vl" style="left:760px;top:248px;height:20px;background:#d6d6de"></div>
<div class="vl" style="left:844px;top:248px;height:20px;background:#d6d6de"></div>
<div class="vl" style="left:894px;top:248px;height:20px;background:#d6d6de"></div>
<div class="tx" style="left:117.49px;top:252px;font-size:11px;color:#000;transform:scaleX(0.9109);">SAPLMGM…</div>
<svg style="left:97px;top:252px" width="16" height="12" viewBox="0 0 16 12"><rect x="0.5" y="0.5" width="14.5" height="10.5" fill="#fbfbfb" stroke="#c4c4c4"/><rect x="1" y="1" width="13.5" height="1.5" fill="#dcdcdc"/><rect x="15" y="1.5" width="1" height="10.5" fill="#a8a8b0"/><rect x="1.5" y="11" width="14.5" height="1" fill="#a8a8b0"/></svg>
<div class="tx" style="left:293.63px;top:252px;font-size:11px;color:#000;transform:scaleX(0.9667);">Main screens with 10 subscreens</div>
<div style="left:501px;top:260px;width:1px;height:2px;background:#102"></div><div style="left:505px;top:260px;width:1px;height:2px;background:#102"></div><div style="left:509px;top:260px;width:1px;height:2px;background:#102"></div>
<svg style="left:53px;top:252px" width="12" height="12" viewBox="0 0 12 12"><defs><linearGradient id="cbg" x1="0" y1="0" x2="1" y2="1"><stop offset="0" stop-color="#cfcfcf"/><stop offset="0.6" stop-color="#f4f4f4"/><stop offset="1" stop-color="#fff"/></linearGradient></defs><rect x="0.5" y="0.5" width="11" height="11" fill="url(#cbg)" stroke="#8c8c8c"/><path d="M2.6 5.8 L4.9 8.6 L9.2 2.8" fill="none" stroke="#2c70d0" stroke-width="2.3"/></svg>
<div class="hg" style="left:8px;top:269px;width:30px;height:21px;border-left:1px solid #a9a9a9;border-right:1px solid #a9a9a9;border-bottom:1px solid #c8c8c8"></div>
<div style="left:38px;top:269px;width:857px;height:20px;background:#fdca98"></div>
<div class="hl" style="left:38px;top:289px;width:857px;background:#d3d3dd"></div>
<div class="vl" style="left:79px;top:269px;height:20px;background:#d6d6de"></div>
<div class="vl" style="left:187px;top:269px;height:20px;background:#d6d6de"></div>
<div class="vl" style="left:291px;top:269px;height:20px;background:#d6d6de"></div>
<div class="vl" style="left:514px;top:269px;height:20px;background:#d6d6de"></div>
<div class="vl" style="left:586px;top:269px;height:20px;background:#d6d6de"></div>
<div class="vl" style="left:692px;top:269px;height:20px;background:#d6d6de"></div>
<div class="vl" style="left:760px;top:269px;height:20px;background:#d6d6de"></div>
<div class="vl" style="left:844px;top:269px;height:20px;background:#d6d6de"></div>
<div class="vl" style="left:894px;top:269px;height:20px;background:#d6d6de"></div>
<div class="tx" style="left:189.91px;top:273px;font-size:11px;color:#000;transform:scaleX(0.8895);">BDC_OKCODE</div>
<div class="tx" style="left:293.90px;top:273px;font-size:11px;color:#000;transform:scaleX(0.9709);">OK Code for this screen</div>
<div class="tx" style="left:588.90px;top:273px;font-size:11px;color:#000;transform:scaleX(0.8900);">=BU</div>
<svg style="left:53px;top:273px" width="12" height="12" viewBox="0 0 12 12"><defs><linearGradient id="cbg" x1="0" y1="0" x2="1" y2="1"><stop offset="0" stop-color="#cfcfcf"/><stop offset="0.6" stop-color="#f4f4f4"/><stop offset="1" stop-color="#fff"/></linearGradient></defs><rect x="0.5" y="0.5" width="11" height="11" fill="url(#cbg)" stroke="#8c8c8c"/><path d="M2.6 5.8 L4.9 8.6 L9.2 2.8" fill="none" stroke="#2c70d0" stroke-width="2.3"/></svg>
<svg style="left:528px;top:272px" width="14" height="14" viewBox="0 0 14 14"><path d="M1.8 12.8 L4.8 9.5" stroke="#4a4a50" stroke-width="2.4" stroke-linecap="round"/><path d="M1.8 12.8 L4.8 9.5" stroke="#f4ecd0" stroke-width="1" stroke-linecap="round"/><circle cx="10.3" cy="3.9" r="2.9" fill="#d4b46a" stroke="#55525a" stroke-width="0.9"/><circle cx="6.4" cy="7.6" r="3.1" fill="#d2b068" stroke="#55525a" stroke-width="0.9"/><circle cx="9.8" cy="3.3" r="1.1" fill="#f8ecc0"/><circle cx="5.8" cy="7" r="1.2" fill="#f6e8b8"/></svg>
<svg style="left:545px;top:274px" width="11" height="12" viewBox="0 0 11 12"><path d="M0.5 3.8 H4.8 V0.6 L10 5.8 L4.8 11 V7.8 H0.5 Z" fill="#767676" stroke="#6a6aa8" stroke-width="0.5"/><path d="M1 4.3 H5 V2" stroke="#9a9a9a" stroke-width="0.8" fill="none"/></svg>
<svg style="left:556px;top:275px" width="19" height="9" viewBox="0 0 19 9"><defs><linearGradient id="pg" x1="0" x2="1"><stop offset="0" stop-color="#6e6e84"/><stop offset="0.55" stop-color="#7878a8"/><stop offset="1" stop-color="#4f8ee0"/></linearGradient></defs><path d="M0 0 H19 L10.5 9 H0 Z" fill="url(#pg)"/></svg>
<div class="hg" style="left:8px;top:290px;width:30px;height:21px;border-left:1px solid #a9a9a9;border-right:1px solid #a9a9a9;border-bottom:1px solid #c8c8c8"></div>
<div style="left:38px;top:290px;width:857px;height:20px;background:#fdca98"></div>
<div class="hl" style="left:38px;top:310px;width:857px;background:#d3d3dd"></div>
<div class="vl" style="left:79px;top:290px;height:20px;background:#d6d6de"></div>
<div class="vl" style="left:187px;top:290px;height:20px;background:#d6d6de"></div>
<div class="vl" style="left:291px;top:290px;height:20px;background:#d6d6de"></div>
<div class="vl" style="left:514px;top:290px;height:20px;background:#d6d6de"></div>
<div class="vl" style="left:586px;top:290px;height:20px;background:#d6d6de"></div>
<div class="vl" style="left:692px;top:290px;height:20px;background:#d6d6de"></div>
<div class="vl" style="left:760px;top:290px;height:20px;background:#d6d6de"></div>
<div class="vl" style="left:844px;top:290px;height:20px;background:#d6d6de"></div>
<div class="vl" style="left:894px;top:290px;height:20px;background:#d6d6de"></div>
<div class="tx" style="left:189.90px;top:294px;font-size:11px;color:#000;transform:scaleX(0.8960);">BDC_CURSOR</div>
<div class="tx" style="left:293.60px;top:294px;font-size:11px;color:#000;transform:scaleX(0.9958);">Cursor location</div>
<div class="tx" style="left:588.69px;top:294px;font-size:11px;color:#000;transform:scaleX(0.9147);">MARA-NTGEW</div>
<svg style="left:53px;top:294px" width="12" height="12" viewBox="0 0 12 12"><defs><linearGradient id="cbg" x1="0" y1="0" x2="1" y2="1"><stop offset="0" stop-color="#cfcfcf"/><stop offset="0.6" stop-color="#f4f4f4"/><stop offset="1" stop-color="#fff"/></linearGradient></defs><rect x="0.5" y="0.5" width="11" height="11" fill="url(#cbg)" stroke="#8c8c8c"/><path d="M2.6 5.8 L4.9 8.6 L9.2 2.8" fill="none" stroke="#2c70d0" stroke-width="2.3"/></svg>
<svg style="left:528px;top:293px" width="14" height="14" viewBox="0 0 14 14"><path d="M1.8 12.8 L4.8 9.5" stroke="#4a4a50" stroke-width="2.4" stroke-linecap="round"/><path d="M1.8 12.8 L4.8 9.5" stroke="#f4ecd0" stroke-width="1" stroke-linecap="round"/><circle cx="10.3" cy="3.9" r="2.9" fill="#d4b46a" stroke="#55525a" stroke-width="0.9"/><circle cx="6.4" cy="7.6" r="3.1" fill="#d2b068" stroke="#55525a" stroke-width="0.9"/><circle cx="9.8" cy="3.3" r="1.1" fill="#f8ecc0"/><circle cx="5.8" cy="7" r="1.2" fill="#f6e8b8"/></svg>
<svg style="left:545px;top:295px" width="11" height="12" viewBox="0 0 11 12"><path d="M0.5 3.8 H4.8 V0.6 L10 5.8 L4.8 11 V7.8 H0.5 Z" fill="#767676" stroke="#6a6aa8" stroke-width="0.5"/><path d="M1 4.3 H5 V2" stroke="#9a9a9a" stroke-width="0.8" fill="none"/></svg>
<svg style="left:556px;top:296px" width="19" height="9" viewBox="0 0 19 9"><defs><linearGradient id="pg" x1="0" x2="1"><stop offset="0" stop-color="#6e6e84"/><stop offset="0.55" stop-color="#7878a8"/><stop offset="1" stop-color="#4f8ee0"/></linearGradient></defs><path d="M0 0 H19 L10.5 9 H0 Z" fill="url(#pg)"/></svg>
<div class="hg" style="left:8px;top:311px;width:30px;height:21px;border-left:1px solid #a9a9a9;border-right:1px solid #a9a9a9;border-bottom:1px solid #c8c8c8"></div>
<div style="left:38px;top:311px;width:857px;height:20px;background:#cbfdcb"></div>
<div class="hl" style="left:38px;top:331px;width:857px;background:#d3d3dd"></div>
<div class="vl" style="left:79px;top:311px;height:20px;background:#d6d6de"></div>
<div class="vl" style="left:187px;top:311px;height:20px;background:#d6d6de"></div>
<div class="vl" style="left:291px;top:311px;height:20px;background:#d6d6de"></div>
<div class="vl" style="left:514px;top:311px;height:20px;background:#d6d6de"></div>
<div class="vl" style="left:586px;top:311px;height:20px;background:#d6d6de"></div>
<div class="vl" style="left:692px;top:311px;height:20px;background:#d6d6de"></div>
<div class="vl" style="left:760px;top:311px;height:20px;background:#d6d6de"></div>
<div class="vl" style="left:844px;top:311px;height:20px;background:#d6d6de"></div>
<div class="vl" style="left:894px;top:311px;height:20px;background:#d6d6de"></div>
<div class="tx" style="left:189.90px;top:315px;font-size:11px;color:#000;transform:scaleX(0.9013);">MARA-BRGEW</div>
<div class="tx" style="left:293.90px;top:315px;font-size:11px;color:#000;transform:scaleX(0.9688);">Gross weight</div>
<div class="tx" style="left:588.71px;top:315px;font-size:11px;color:#000;transform:scaleX(0.8900);">B</div>
<svg style="left:53px;top:315px" width="12" height="12" viewBox="0 0 12 12"><defs><linearGradient id="cbg" x1="0" y1="0" x2="1" y2="1"><stop offset="0" stop-color="#cfcfcf"/><stop offset="0.6" stop-color="#f4f4f4"/><stop offset="1" stop-color="#fff"/></linearGradient></defs><rect x="0.5" y="0.5" width="11" height="11" fill="url(#cbg)" stroke="#8c8c8c"/><path d="M2.6 5.8 L4.9 8.6 L9.2 2.8" fill="none" stroke="#2c70d0" stroke-width="2.3"/></svg>
<svg style="left:527px;top:313px" width="16" height="16" viewBox="0 0 16 16"><rect x="1" y="1" width="14" height="14" fill="#fff" stroke="#6a726a" stroke-width="2"/><rect x="2.5" y="2.5" width="11" height="11" fill="none" stroke="#a8d0a8" stroke-width="0.6"/><path d="M3.6 4.6 L12.4 11.4 M12.4 4.6 L3.6 11.4" stroke="#5a665a" stroke-width="3.4"/><path d="M3.8 4.8 L12.2 11.2 M12.2 4.8 L3.8 11.2" stroke="#58aa58" stroke-width="2"/><path d="M4 5 L12 11" stroke="#a8e0a8" stroke-width="0.7"/></svg>
<svg style="left:545px;top:316px" width="11" height="12" viewBox="0 0 11 12"><path d="M0.5 3.8 H4.8 V0.6 L10 5.8 L4.8 11 V7.8 H0.5 Z" fill="#767676" stroke="#6a6aa8" stroke-width="0.5"/><path d="M1 4.3 H5 V2" stroke="#9a9a9a" stroke-width="0.8" fill="none"/></svg>
<svg style="left:556px;top:317px" width="19" height="9" viewBox="0 0 19 9"><defs><linearGradient id="pg" x1="0" x2="1"><stop offset="0" stop-color="#6e6e84"/><stop offset="0.55" stop-color="#7878a8"/><stop offset="1" stop-color="#4f8ee0"/></linearGradient></defs><path d="M0 0 H19 L10.5 9 H0 Z" fill="url(#pg)"/></svg>
<div class="hg" style="left:8px;top:332px;width:30px;height:21px;border-left:1px solid #a9a9a9;border-right:1px solid #a9a9a9;border-bottom:1px solid #c8c8c8"></div>
<div style="left:38px;top:332px;width:857px;height:20px;background:#cbfdcb"></div>
<div class="hl" style="left:38px;top:352px;width:857px;background:#d3d3dd"></div>
<div class="vl" style="left:79px;top:332px;height:20px;background:#d6d6de"></div>
<div class="vl" style="left:187px;top:332px;height:20px;background:#d6d6de"></div>
<div class="vl" style="left:291px;top:332px;height:20px;background:#d6d6de"></div>
<div class="vl" style="left:514px;top:332px;height:20px;background:#d6d6de"></div>
<div class="vl" style="left:586px;top:332px;height:20px;background:#d6d6de"></div>
<div class="vl" style="left:692px;top:332px;height:20px;background:#d6d6de"></div>
<div class="vl" style="left:760px;top:332px;height:20px;background:#d6d6de"></div>
<div class="vl" style="left:844px;top:332px;height:20px;background:#d6d6de"></div>
<div class="vl" style="left:894px;top:332px;height:20px;background:#d6d6de"></div>
<div class="tx" style="left:189.89px;top:336px;font-size:11px;color:#000;transform:scaleX(0.9147);">MARA-NTGEW</div>
<div class="tx" style="left:293.58px;top:336px;font-size:11px;color:#000;transform:scaleX(1.0196);">Net weight</div>
<div class="tx" style="left:588.71px;top:336px;font-size:11px;color:#000;transform:scaleX(0.8900);">C</div>
<svg style="left:53px;top:336px" width="12" height="12" viewBox="0 0 12 12"><defs><linearGradient id="cbg" x1="0" y1="0" x2="1" y2="1"><stop offset="0" stop-color="#cfcfcf"/><stop offset="0.6" stop-color="#f4f4f4"/><stop offset="1" stop-color="#fff"/></linearGradient></defs><rect x="0.5" y="0.5" width="11" height="11" fill="url(#cbg)" stroke="#8c8c8c"/><path d="M2.6 5.8 L4.9 8.6 L9.2 2.8" fill="none" stroke="#2c70d0" stroke-width="2.3"/></svg>
<svg style="left:527px;top:334px" width="16" height="16" viewBox="0 0 16 16"><rect x="1" y="1" width="14" height="14" fill="#fff" stroke="#6a726a" stroke-width="2"/><rect x="2.5" y="2.5" width="11" height="11" fill="none" stroke="#a8d0a8" stroke-width="0.6"/><path d="M3.6 4.6 L12.4 11.4 M12.4 4.6 L3.6 11.4" stroke="#5a665a" stroke-width="3.4"/><path d="M3.8 4.8 L12.2 11.2 M12.2 4.8 L3.8 11.2" stroke="#58aa58" stroke-width="2"/><path d="M4 5 L12 11" stroke="#a8e0a8" stroke-width="0.7"/></svg>
<svg style="left:545px;top:337px" width="11" height="12" viewBox="0 0 11 12"><path d="M0.5 3.8 H4.8 V0.6 L10 5.8 L4.8 11 V7.8 H0.5 Z" fill="#767676" stroke="#6a6aa8" stroke-width="0.5"/><path d="M1 4.3 H5 V2" stroke="#9a9a9a" stroke-width="0.8" fill="none"/></svg>
<svg style="left:556px;top:338px" width="19" height="9" viewBox="0 0 19 9"><defs><linearGradient id="pg" x1="0" x2="1"><stop offset="0" stop-color="#6e6e84"/><stop offset="0.55" stop-color="#7878a8"/><stop offset="1" stop-color="#4f8ee0"/></linearGradient></defs><path d="M0 0 H19 L10.5 9 H0 Z" fill="url(#pg)"/></svg>
<svg style="left:884px;top:26px" width="15" height="17" viewBox="0 0 15 17"><path d="M9 8 V4.5 Q9 1.8 11.8 1.8 Q14.5 1.8 14.5 4.5 V9" fill="none" stroke="#7a7a7a" stroke-width="1.8"/><path d="M10 7 V4.5 Q10 2.8 11.8 2.8" fill="none" stroke="#c8c8c8" stroke-width="0.6"/><rect x="2" y="7" width="9.5" height="9" rx="1.5" fill="#3a3a3a"/><rect x="3" y="10" width="1.8" height="5" fill="#e87010"/><rect x="5.8" y="10" width="1.8" height="5" fill="#f0a020"/><rect x="8.6" y="10" width="1.8" height="5" fill="#d86a10"/><circle cx="7" cy="8.8" r="1.3" fill="#d8ecff"/></svg>
<div style="left:6px;top:375px;width:891px;height:4px;border-radius:2px;background:#909090"></div>
<div style="left:444px;top:376px;width:2px;height:2px;background:#fff"></div>
<div style="left:448px;top:376px;width:2px;height:2px;background:#fff"></div>
<div style="left:452px;top:376px;width:2px;height:2px;background:#fff"></div>
<div style="left:456px;top:376px;width:2px;height:2px;background:#fff"></div>
<div style="left:6px;top:380px;width:891px;height:240px;border:1px solid #a9a9a9;background:#ececec"></div>
<div style="left:38px;top:402px;width:857px;height:210px;background:#fff"></div>
<div class="hg" style="left:8px;top:382px;width:887px;height:20px;border-left:1px solid #a9a9a9;border-top:1px solid #a9a9a9;border-bottom:1px solid #a9a9a9"></div>
<div style="left:895px;top:382px;width:1px;height:240px;background:#c8c8c8"></div>
<div class="vl" style="left:37px;top:383px;height:18px;background:#b4b4b4"></div>
<div class="vl" style="left:164px;top:383px;height:18px;background:#b4b4b4"></div>
<div class="vl" style="left:276px;top:383px;height:18px;background:#b4b4b4"></div>
<div class="vl" style="left:377px;top:383px;height:18px;background:#b4b4b4"></div>
<div class="vl" style="left:474px;top:383px;height:18px;background:#b4b4b4"></div>
<div class="vl" style="left:726px;top:383px;height:18px;background:#b4b4b4"></div>
<div class="vl" style="left:801px;top:383px;height:18px;background:#b4b4b4"></div>
<div class="vl" style="left:876px;top:383px;height:18px;background:#b4b4b4"></div>
<div class="tx" style="left:37px;top:386px;width:127px;text-align:center;font-size:11px;color:#222">A</div>
<div class="tx" style="left:164px;top:386px;width:112px;text-align:center;font-size:11px;color:#222">B</div>
<div class="tx" style="left:276px;top:386px;width:101px;text-align:center;font-size:11px;color:#222">C</div>
<div class="tx" style="left:377px;top:386px;width:97px;text-align:center;font-size:11px;color:#222">D</div>
<div class="tx" style="left:474px;top:386px;width:252px;text-align:center;font-size:11px;color:#222">E</div>
<div class="tx" style="left:726px;top:386px;width:75px;text-align:center;font-size:11px;color:#222">F</div>
<div class="tx" style="left:801px;top:386px;width:75px;text-align:center;font-size:11px;color:#222">G</div>
<svg style="left:9px;top:383px" width="5" height="5" viewBox="0 0 5 5"><path d="M0 0 H5 Q0 0 0 5 Z" fill="#666"/></svg>
<svg style="left:13px;top:383px" width="18" height="18" viewBox="0 0 18 18"><rect x="4" y="5" width="13.5" height="11.5" fill="#2d6e2d"/><rect x="1.8" y="1.8" width="14" height="14" fill="#fff" stroke="#58a458" stroke-width="1.5"/><rect x="3.2" y="3.2" width="11.2" height="11.2" fill="none" stroke="#c8e8c8" stroke-width="0.6"/><path d="M4.2 5.2 L14 12.3 M13.6 5.2 L4.4 12.3" stroke="#2f8a2f" stroke-width="2.8"/><path d="M4.6 5.2 L13.6 11.8" stroke="#a8dca8" stroke-width="0.8"/></svg>
<div class="hg" style="left:8px;top:402px;width:30px;height:21px;border-left:1px solid #a9a9a9;border-right:1px solid #a9a9a9;border-bottom:1px solid #c8c8c8"></div>
<div class="tx" style="left:9px;top:407px;width:28px;text-align:center;font-size:10px;color:#222">1</div>
<div class="hl" style="left:38px;top:422px;width:857px;background:#d0d7e6"></div>
<div class="vl" style="left:164px;top:402px;height:20px;background:#d0d7e6"></div>
<div class="vl" style="left:276px;top:402px;height:20px;background:#d0d7e6"></div>
<div class="vl" style="left:377px;top:402px;height:20px;background:#d0d7e6"></div>
<div class="vl" style="left:474px;top:402px;height:20px;background:#d0d7e6"></div>
<div class="vl" style="left:726px;top:402px;height:20px;background:#d0d7e6"></div>
<div class="vl" style="left:801px;top:402px;height:20px;background:#d0d7e6"></div>
<div class="vl" style="left:876px;top:402px;height:20px;background:#d0d7e6"></div>
<div class="tx" style="left:40.51px;top:407px;font-size:13px;color:#000;transform:scaleX(0.9916);">Material Number</div>
<div class="tx" style="left:167.50px;top:407px;font-size:13px;color:#000;transform:scaleX(1.0000);">Gross weight</div>
<div class="tx" style="left:279.50px;top:407px;font-size:13px;color:#000;transform:scaleX(1.0000);">Net weight</div>
<div class="hg" style="left:8px;top:423px;width:30px;height:21px;border-left:1px solid #a9a9a9;border-right:1px solid #a9a9a9;border-bottom:1px solid #c8c8c8"></div>
<div class="tx" style="left:9px;top:428px;width:28px;text-align:center;font-size:10px;color:#222">2</div>
<div class="hl" style="left:38px;top:443px;width:857px;background:#d0d7e6"></div>
<div class="vl" style="left:164px;top:423px;height:20px;background:#d0d7e6"></div>
<div class="vl" style="left:276px;top:423px;height:20px;background:#d0d7e6"></div>
<div class="vl" style="left:377px;top:423px;height:20px;background:#d0d7e6"></div>
<div class="vl" style="left:474px;top:423px;height:20px;background:#d0d7e6"></div>
<div class="vl" style="left:726px;top:423px;height:20px;background:#d0d7e6"></div>
<div class="vl" style="left:801px;top:423px;height:20px;background:#d0d7e6"></div>
<div class="vl" style="left:876px;top:423px;height:20px;background:#d0d7e6"></div>
<div class="tx" style="left:41.35px;top:428px;font-size:13px;color:#000;transform:scaleX(0.9500);">100-100</div>
<div class="tx" style="left:167.55px;top:428px;font-size:13px;color:#000;transform:scaleX(0.9500);">350</div>
<div class="tx" style="left:279.55px;top:428px;font-size:13px;color:#000;transform:scaleX(0.9500);">300</div>
<div class="hg" style="left:8px;top:444px;width:30px;height:21px;border-left:1px solid #a9a9a9;border-right:1px solid #a9a9a9;border-bottom:1px solid #c8c8c8"></div>
<div class="tx" style="left:9px;top:449px;width:28px;text-align:center;font-size:10px;color:#222">3</div>
<div class="hl" style="left:38px;top:464px;width:857px;background:#d0d7e6"></div>
<div class="vl" style="left:164px;top:444px;height:20px;background:#d0d7e6"></div>
<div class="vl" style="left:276px;top:444px;height:20px;background:#d0d7e6"></div>
<div class="vl" style="left:377px;top:444px;height:20px;background:#d0d7e6"></div>
<div class="vl" style="left:474px;top:444px;height:20px;background:#d0d7e6"></div>
<div class="vl" style="left:726px;top:444px;height:20px;background:#d0d7e6"></div>
<div class="vl" style="left:801px;top:444px;height:20px;background:#d0d7e6"></div>
<div class="vl" style="left:876px;top:444px;height:20px;background:#d0d7e6"></div>
<div class="tx" style="left:41.35px;top:449px;font-size:13px;color:#000;transform:scaleX(0.9500);">100-101</div>
<div class="tx" style="left:168.50px;top:449px;font-size:13px;color:#000;transform:scaleX(0.9500);">450</div>
<div class="tx" style="left:280.50px;top:449px;font-size:13px;color:#000;transform:scaleX(0.9500);">400</div>
<div class="hg" style="left:8px;top:465px;width:30px;height:21px;border-left:1px solid #a9a9a9;border-right:1px solid #a9a9a9;border-bottom:1px solid #c8c8c8"></div>
<div class="tx" style="left:9px;top:470px;width:28px;text-align:center;font-size:10px;color:#222">4</div>
<div class="hl" style="left:38px;top:485px;width:857px;background:#d0d7e6"></div>
<div class="vl" style="left:164px;top:465px;height:20px;background:#d0d7e6"></div>
<div class="vl" style="left:276px;top:465px;height:20px;background:#d0d7e6"></div>
<div class="vl" style="left:377px;top:465px;height:20px;background:#d0d7e6"></div>
<div class="vl" style="left:474px;top:465px;height:20px;background:#d0d7e6"></div>
<div class="vl" style="left:726px;top:465px;height:20px;background:#d0d7e6"></div>
<div class="vl" style="left:801px;top:465px;height:20px;background:#d0d7e6"></div>
<div class="vl" style="left:876px;top:465px;height:20px;background:#d0d7e6"></div>
<div class="tx" style="left:41.35px;top:470px;font-size:13px;color:#000;transform:scaleX(0.9500);">100-110</div>
<div class="tx" style="left:167.55px;top:470px;font-size:13px;color:#000;transform:scaleX(0.9500);">550</div>
<div class="tx" style="left:279.55px;top:470px;font-size:13px;color:#000;transform:scaleX(0.9500);">500</div>
<div class="hg" style="left:8px;top:486px;width:30px;height:21px;border-left:1px solid #a9a9a9;border-right:1px solid #a9a9a9;border-bottom:1px solid #c8c8c8"></div>
<div class="tx" style="left:9px;top:491px;width:28px;text-align:center;font-size:10px;color:#222">5</div>
<div class="hl" style="left:38px;top:506px;width:857px;background:#d0d7e6"></div>
<div class="vl" style="left:164px;top:486px;height:20px;background:#d0d7e6"></div>
<div class="vl" style="left:276px;top:486px;height:20px;background:#d0d7e6"></div>
<div class="vl" style="left:377px;top:486px;height:20px;background:#d0d7e6"></div>
<div class="vl" style="left:474px;top:486px;height:20px;background:#d0d7e6"></div>
<div class="vl" style="left:726px;top:486px;height:20px;background:#d0d7e6"></div>
<div class="vl" style="left:801px;top:486px;height:20px;background:#d0d7e6"></div>
<div class="vl" style="left:876px;top:486px;height:20px;background:#d0d7e6"></div>
<div class="tx" style="left:41.35px;top:491px;font-size:13px;color:#000;transform:scaleX(0.9500);">100-120</div>
<div class="tx" style="left:167.55px;top:491px;font-size:13px;color:#000;transform:scaleX(0.9500);">650</div>
<div class="tx" style="left:279.55px;top:491px;font-size:13px;color:#000;transform:scaleX(0.9500);">600</div>
<div class="hg" style="left:8px;top:507px;width:30px;height:21px;border-left:1px solid #a9a9a9;border-right:1px solid #a9a9a9;border-bottom:1px solid #c8c8c8"></div>
<div class="tx" style="left:9px;top:512px;width:28px;text-align:center;font-size:10px;color:#222">6</div>
<div class="hl" style="left:38px;top:527px;width:857px;background:#d0d7e6"></div>
<div class="vl" style="left:164px;top:507px;height:20px;background:#d0d7e6"></div>
<div class="vl" style="left:276px;top:507px;height:20px;background:#d0d7e6"></div>
<div class="vl" style="left:377px;top:507px;height:20px;background:#d0d7e6"></div>
<div class="vl" style="left:474px;top:507px;height:20px;background:#d0d7e6"></div>
<div class="vl" style="left:726px;top:507px;height:20px;background:#d0d7e6"></div>
<div class="vl" style="left:801px;top:507px;height:20px;background:#d0d7e6"></div>
<div class="vl" style="left:876px;top:507px;height:20px;background:#d0d7e6"></div>
<div class="tx" style="left:41.35px;top:512px;font-size:13px;color:#000;transform:scaleX(0.9500);">100-130</div>
<div class="tx" style="left:167.55px;top:512px;font-size:13px;color:#000;transform:scaleX(0.9500);">750</div>
<div class="tx" style="left:279.55px;top:512px;font-size:13px;color:#000;transform:scaleX(0.9500);">700</div>
<div class="hg" style="left:8px;top:528px;width:30px;height:21px;border-left:1px solid #a9a9a9;border-right:1px solid #a9a9a9;border-bottom:1px solid #c8c8c8"></div>
<div class="tx" style="left:9px;top:533px;width:28px;text-align:center;font-size:10px;color:#222">7</div>
<div class="hl" style="left:38px;top:548px;width:857px;background:#d0d7e6"></div>
<div class="vl" style="left:164px;top:528px;height:20px;background:#d0d7e6"></div>
<div class="vl" style="left:276px;top:528px;height:20px;background:#d0d7e6"></div>
<div class="vl" style="left:377px;top:528px;height:20px;background:#d0d7e6"></div>
<div class="vl" style="left:474px;top:528px;height:20px;background:#d0d7e6"></div>
<div class="vl" style="left:726px;top:528px;height:20px;background:#d0d7e6"></div>
<div class="vl" style="left:801px;top:528px;height:20px;background:#d0d7e6"></div>
<div class="vl" style="left:876px;top:528px;height:20px;background:#d0d7e6"></div>
<div class="tx" style="left:41.35px;top:533px;font-size:13px;color:#000;transform:scaleX(0.9500);">100-200</div>
<div class="tx" style="left:167.55px;top:533px;font-size:13px;color:#000;transform:scaleX(0.9500);">850</div>
<div class="tx" style="left:279.55px;top:533px;font-size:13px;color:#000;transform:scaleX(0.9500);">800</div>
<div class="hg" style="left:8px;top:549px;width:30px;height:21px;border-left:1px solid #a9a9a9;border-right:1px solid #a9a9a9;border-bottom:1px solid #c8c8c8"></div>
<div class="tx" style="left:9px;top:554px;width:28px;text-align:center;font-size:10px;color:#222">8</div>
<div class="hl" style="left:38px;top:569px;width:857px;background:#d0d7e6"></div>
<div class="vl" style="left:164px;top:549px;height:20px;background:#d0d7e6"></div>
<div class="vl" style="left:276px;top:549px;height:20px;background:#d0d7e6"></div>
<div class="vl" style="left:377px;top:549px;height:20px;background:#d0d7e6"></div>
<div class="vl" style="left:474px;top:549px;height:20px;background:#d0d7e6"></div>
<div class="vl" style="left:726px;top:549px;height:20px;background:#d0d7e6"></div>
<div class="vl" style="left:801px;top:549px;height:20px;background:#d0d7e6"></div>
<div class="vl" style="left:876px;top:549px;height:20px;background:#d0d7e6"></div>
<div class="tx" style="left:41.35px;top:554px;font-size:13px;color:#000;transform:scaleX(0.9500);">100-210</div>
<div class="tx" style="left:167.55px;top:554px;font-size:13px;color:#000;transform:scaleX(0.9500);">950</div>
<div class="tx" style="left:279.55px;top:554px;font-size:13px;color:#000;transform:scaleX(0.9500);">900</div>
<div class="hg" style="left:8px;top:570px;width:30px;height:21px;border-left:1px solid #a9a9a9;border-right:1px solid #a9a9a9;border-bottom:1px solid #c8c8c8"></div>
<div class="tx" style="left:9px;top:575px;width:28px;text-align:center;font-size:10px;color:#222">9</div>
<div class="hl" style="left:38px;top:590px;width:857px;background:#d0d7e6"></div>
<div class="vl" style="left:164px;top:570px;height:20px;background:#d0d7e6"></div>
<div class="vl" style="left:276px;top:570px;height:20px;background:#d0d7e6"></div>
<div class="vl" style="left:377px;top:570px;height:20px;background:#d0d7e6"></div>
<div class="vl" style="left:474px;top:570px;height:20px;background:#d0d7e6"></div>
<div class="vl" style="left:726px;top:570px;height:20px;background:#d0d7e6"></div>
<div class="vl" style="left:801px;top:570px;height:20px;background:#d0d7e6"></div>
<div class="vl" style="left:876px;top:570px;height:20px;background:#d0d7e6"></div>
<div class="tx" style="left:41.35px;top:575px;font-size:13px;color:#000;transform:scaleX(0.9500);">100-300</div>
<div class="tx" style="left:168.35px;top:575px;font-size:13px;color:#000;transform:scaleX(0.9500);">1050</div>
<div class="tx" style="left:280.35px;top:575px;font-size:13px;color:#000;transform:scaleX(0.9500);">1000</div>
<div class="hg" style="left:8px;top:591px;width:30px;height:21px;border-left:1px solid #a9a9a9;border-right:1px solid #a9a9a9;border-bottom:1px solid #c8c8c8"></div>
<div class="tx" style="left:9px;top:596px;width:28px;text-align:center;font-size:10px;color:#222">10</div>
<div class="hl" style="left:38px;top:611px;width:857px;background:#d0d7e6"></div>
<div class="vl" style="left:164px;top:591px;height:20px;background:#d0d7e6"></div>
<div class="vl" style="left:276px;top:591px;height:20px;background:#d0d7e6"></div>
<div class="vl" style="left:377px;top:591px;height:20px;background:#d0d7e6"></div>
<div class="vl" style="left:474px;top:591px;height:20px;background:#d0d7e6"></div>
<div class="vl" style="left:726px;top:591px;height:20px;background:#d0d7e6"></div>
<div class="vl" style="left:801px;top:591px;height:20px;background:#d0d7e6"></div>
<div class="vl" style="left:876px;top:591px;height:20px;background:#d0d7e6"></div>
<div class="tx" style="left:41.35px;top:596px;font-size:13px;color:#000;transform:scaleX(0.9500);">100-301</div>
<div class="tx" style="left:168.35px;top:596px;font-size:13px;color:#000;transform:scaleX(0.9500);">1150</div>
<div class="tx" style="left:280.35px;top:596px;font-size:13px;color:#000;transform:scaleX(0.9500);">1100</div>
</body></html>
